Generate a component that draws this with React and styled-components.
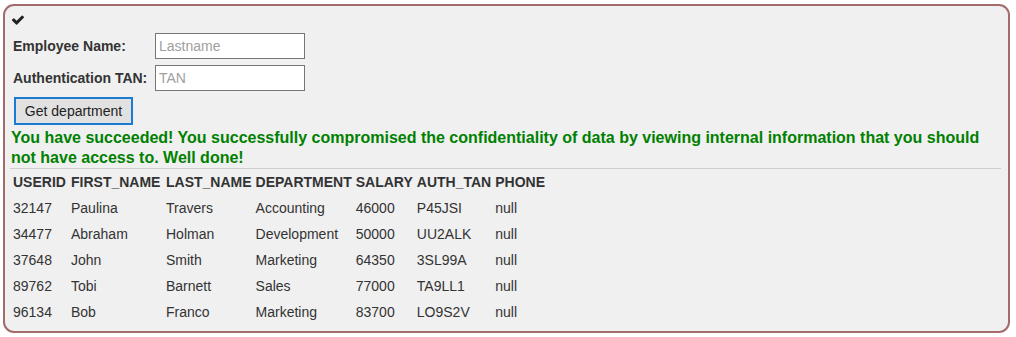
import React from "react";
import styled, { createGlobalStyle } from "styled-components";

const Global = createGlobalStyle`
  html, body { margin: 0; padding: 0; background: #ffffff; }
  body { font-family: "Liberation Sans", Arial, sans-serif; font-size: 14px; color: #333; }
`;

const Page = styled.div`
  padding: 4px 6px 5px 3px;
`;

const Panel = styled.div`
  box-sizing: border-box;
  height: 329px;
  border: 2px solid #a36b6b;
  border-radius: 11px;
  background: #f0f0f0;
  padding: 4px 7px 0 7px;
`;

const CheckRow = styled.div`
  height: 20px;
  display: flex;
  align-items: center;
`;

const FormGrid = styled.div`
  display: grid;
  grid-template-columns: 136px 150px;
  column-gap: 7px;
  row-gap: 6px;
  align-items: center;
  margin-top: 3px;
`;

const Label = styled.label`
  font-weight: bold;
  font-size: 14px;
  color: #333;
  white-space: nowrap;
  line-height: 20px;
  padding-left: 1px;
`;

const Input = styled.input`
  box-sizing: border-box;
  width: 150px;
  height: 26px;
  margin: 0;
  border: 1px solid #767676;
  background: #fff;
  font-family: "Liberation Sans", Arial, sans-serif;
  font-size: 14px;
  padding: 1px 3px;
  color: #333;
  &::placeholder { color: #a0a0a0; }
`;

const ButtonRow = styled.div`
  padding: 6px 0 0 2px;
`;

const Button = styled.button`
  box-sizing: border-box;
  height: 28px;
  width: 119px;
  margin: 0;
  border: 2px solid #1a7bd3;
  background: #e1e1e1;
  font-family: "Liberation Sans", Arial, sans-serif;
  font-size: 14px;
  color: #222;
  padding: 0 6px;
`;

const Success = styled.p`
  margin: 3px 0 0 -1px;
  color: #008000;
  font-weight: bold;
  font-size: 16px;
  line-height: 20px;
`;

const Rule = styled.hr`
  border: 0;
  border-top: 1px solid #cfcfcf;
  margin: 0 0 0 -2px;
`;

const Table = styled.table`
  border-collapse: separate;
  border-spacing: 2px 0;
  margin-left: -2px;
  margin-top: 0;
`;

const Th = styled.th`
  font-weight: bold;
  text-align: left;
  padding: 2px 1px;
  height: 22px;
  color: #333;
  white-space: nowrap;
  min-width: ${(p) => p.$min || 0}px;
`;

const Td = styled.td`
  padding: 2px 1px;
  height: 22px;
  color: #333;
  white-space: nowrap;
`;

const CheckIcon = () => (
  <svg width="12" height="11" viewBox="0 0 1550 1280" aria-hidden="true">
    <path
      fill="#222"
      d="M1550 232q0 40-28 68l-724 724-136 136q-28 28-68 28t-68-28l-136-136-362-362q-28-28-28-68t28-68l136-136q28-28 68-28t68 28l294 295 656-657q28-28 68-28t68 28l136 136q28 28 28 68z"
    />
  </svg>
);

const headers = [
  { t: "USERID", w: 54 },
  { t: "FIRST_NAME", w: 91 },
  { t: "LAST_NAME", w: 84 },
  { t: "DEPARTMENT", w: 96 },
  { t: "SALARY", w: 55 },
  { t: "AUTH_TAN", w: 72 },
  { t: "PHONE", w: 0 },
];
const rows = [
  ["32147", "Paulina", "Travers", "Accounting", "46000", "P45JSI", "null"],
  ["34477", "Abraham", "Holman", "Development", "50000", "UU2ALK", "null"],
  ["37648", "John", "Smith", "Marketing", "64350", "3SL99A", "null"],
  ["89762", "Tobi", "Barnett", "Sales", "77000", "TA9LL1", "null"],
  ["96134", "Bob", "Franco", "Marketing", "83700", "LO9S2V", "null"],
];

export default function App() {
  return (
    <Page>
      <Global />
      <Panel>
        <CheckRow>
          <CheckIcon />
        </CheckRow>
        <FormGrid>
          <Label>Employee Name:</Label>
          <Input placeholder="Lastname" />
          <Label>Authentication TAN:</Label>
          <Input placeholder="TAN" />
        </FormGrid>
        <ButtonRow>
          <Button>Get department</Button>
        </ButtonRow>
        <Success>
          You have succeeded! You successfully compromised the confidentiality of data by viewing internal information that you should not have access to. Well done!
        </Success>
        <Rule />
        <Table>
          <thead>
            <tr>
              {headers.map((h) => (
                <Th key={h.t} $min={h.w}>{h.t}</Th>
              ))}
            </tr>
          </thead>
          <tbody>
            {rows.map((r) => (
              <tr key={r[0]}>
                {r.map((c, i) => (
                  <Td key={i}>{c}</Td>
                ))}
              </tr>
            ))}
          </tbody>
        </Table>
      </Panel>
    </Page>
  );
}
